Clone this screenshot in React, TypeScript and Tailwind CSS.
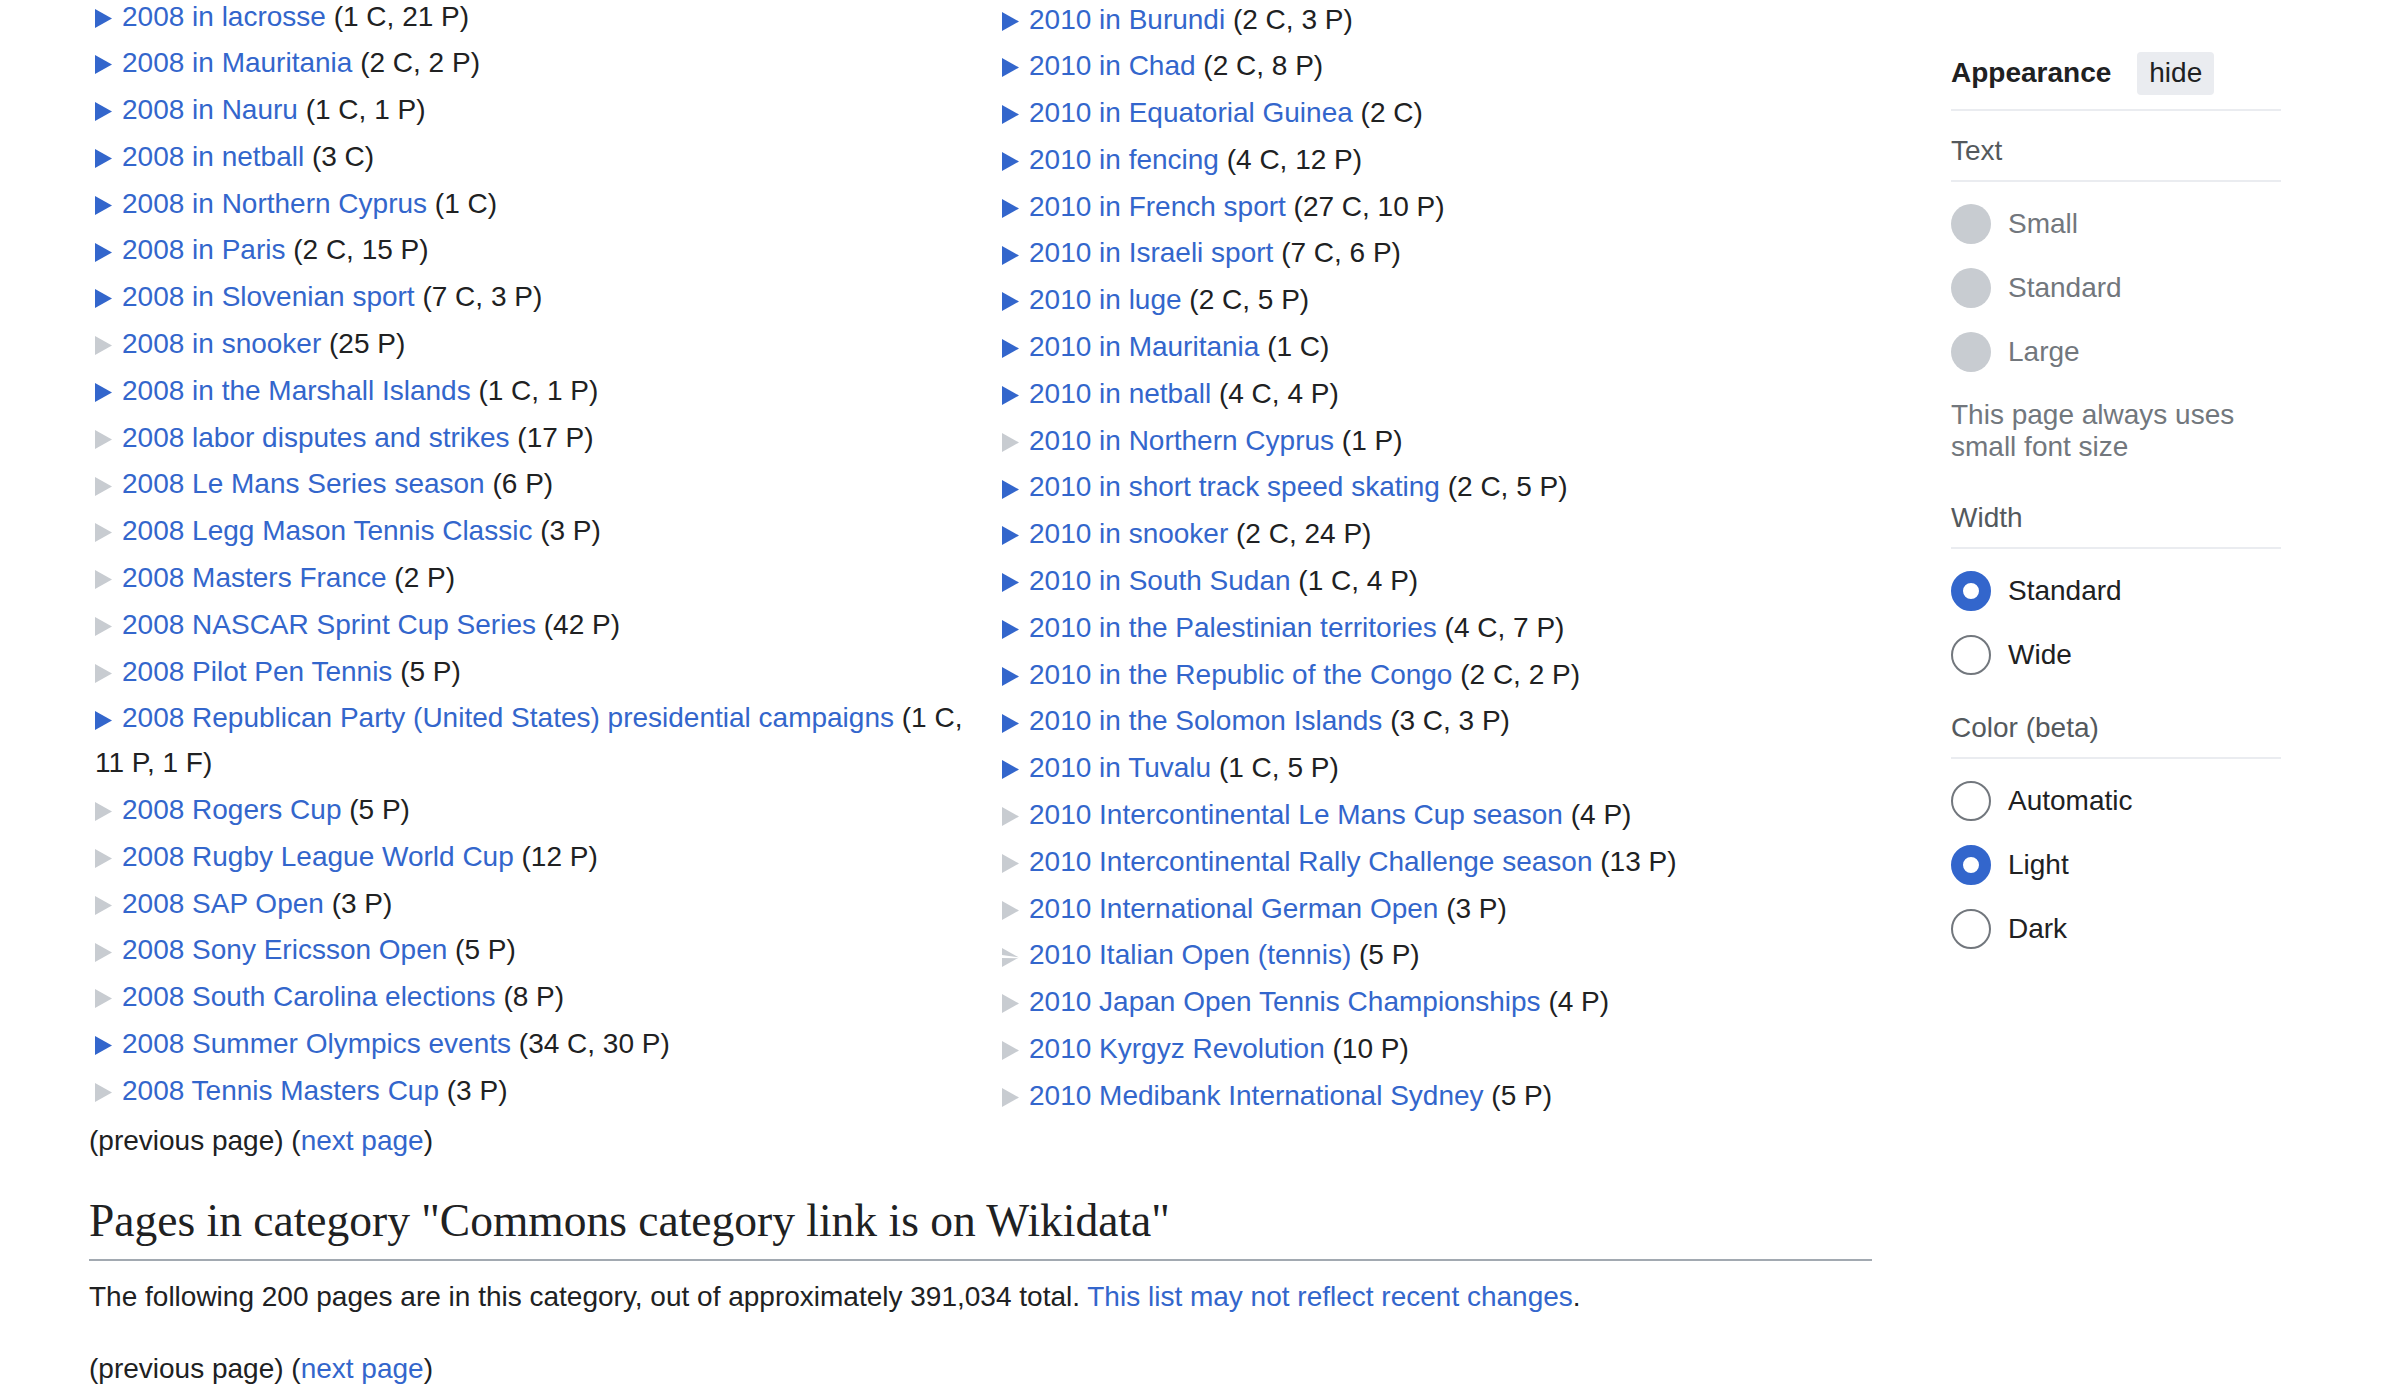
import React from "react";

type Item = { t: string; c: string; k: "b" | "g" | "x" };

const left: Item[] = [
  { t: "2008 in lacrosse", c: "(1 C, 21 P)", k: "b" },
  { t: "2008 in Mauritania", c: "(2 C, 2 P)", k: "b" },
  { t: "2008 in Nauru", c: "(1 C, 1 P)", k: "b" },
  { t: "2008 in netball", c: "(3 C)", k: "b" },
  { t: "2008 in Northern Cyprus", c: "(1 C)", k: "b" },
  { t: "2008 in Paris", c: "(2 C, 15 P)", k: "b" },
  { t: "2008 in Slovenian sport", c: "(7 C, 3 P)", k: "b" },
  { t: "2008 in snooker", c: "(25 P)", k: "g" },
  { t: "2008 in the Marshall Islands", c: "(1 C, 1 P)", k: "b" },
  { t: "2008 labor disputes and strikes", c: "(17 P)", k: "g" },
  { t: "2008 Le Mans Series season", c: "(6 P)", k: "g" },
  { t: "2008 Legg Mason Tennis Classic", c: "(3 P)", k: "g" },
  { t: "2008 Masters France", c: "(2 P)", k: "g" },
  { t: "2008 NASCAR Sprint Cup Series", c: "(42 P)", k: "g" },
  { t: "2008 Pilot Pen Tennis", c: "(5 P)", k: "g" },
  { t: "2008 Republican Party (United States) presidential campaigns", c: "(1 C, 11 P, 1 F)", k: "b" },
  { t: "2008 Rogers Cup", c: "(5 P)", k: "g" },
  { t: "2008 Rugby League World Cup", c: "(12 P)", k: "g" },
  { t: "2008 SAP Open", c: "(3 P)", k: "g" },
  { t: "2008 Sony Ericsson Open", c: "(5 P)", k: "g" },
  { t: "2008 South Carolina elections", c: "(8 P)", k: "g" },
  { t: "2008 Summer Olympics events", c: "(34 C, 30 P)", k: "b" },
  { t: "2008 Tennis Masters Cup", c: "(3 P)", k: "g" },
];

const right: Item[] = [
  { t: "2010 in Burundi", c: "(2 C, 3 P)", k: "b" },
  { t: "2010 in Chad", c: "(2 C, 8 P)", k: "b" },
  { t: "2010 in Equatorial Guinea", c: "(2 C)", k: "b" },
  { t: "2010 in fencing", c: "(4 C, 12 P)", k: "b" },
  { t: "2010 in French sport", c: "(27 C, 10 P)", k: "b" },
  { t: "2010 in Israeli sport", c: "(7 C, 6 P)", k: "b" },
  { t: "2010 in luge", c: "(2 C, 5 P)", k: "b" },
  { t: "2010 in Mauritania", c: "(1 C)", k: "b" },
  { t: "2010 in netball", c: "(4 C, 4 P)", k: "b" },
  { t: "2010 in Northern Cyprus", c: "(1 P)", k: "g" },
  { t: "2010 in short track speed skating", c: "(2 C, 5 P)", k: "b" },
  { t: "2010 in snooker", c: "(2 C, 24 P)", k: "b" },
  { t: "2010 in South Sudan", c: "(1 C, 4 P)", k: "b" },
  { t: "2010 in the Palestinian territories", c: "(4 C, 7 P)", k: "b" },
  { t: "2010 in the Republic of the Congo", c: "(2 C, 2 P)", k: "b" },
  { t: "2010 in the Solomon Islands", c: "(3 C, 3 P)", k: "b" },
  { t: "2010 in Tuvalu", c: "(1 C, 5 P)", k: "b" },
  { t: "2010 Intercontinental Le Mans Cup season", c: "(4 P)", k: "g" },
  { t: "2010 Intercontinental Rally Challenge season", c: "(13 P)", k: "g" },
  { t: "2010 International German Open", c: "(3 P)", k: "g" },
  { t: "2010 Italian Open (tennis)", c: "(5 P)", k: "x" },
  { t: "2010 Japan Open Tennis Championships", c: "(4 P)", k: "g" },
  { t: "2010 Kyrgyz Revolution", c: "(10 P)", k: "g" },
  { t: "2010 Medibank International Sydney", c: "(5 P)", k: "g" },
];

function Bullet({ k }: { k: "b" | "g" | "x" }) {
  return (
    <svg width="17" height="19" viewBox="0 0 17 19" className="inline-block mr-[10px]">
      <polygon points="0,0 17,9.5 0,19" fill={k === "b" ? "#3366cc" : "#c8ccd1"} />
      {k === "x" && <polygon points="0,7 17,9.3 17,10.3 0,10" fill="#ffffff" />}
    </svg>
  );
}

function Row({ it }: { it: Item }) {
  return (
    <div className="pl-[6px] leading-[44.8px] mb-[2px]">
      <Bullet k={it.k} />
      <a className="text-[#3366cc]">{it.t}</a> {it.c}
    </div>
  );
}

function Radio({ state, label }: { state: "dis" | "on" | "off"; label: string }) {
  const circle =
    state === "dis"
      ? "bg-[#c8ccd1]"
      : state === "on"
      ? "border-[12px] border-[#3366cc] bg-white"
      : "border-2 border-[#72777d] bg-white";
  return (
    <div className="h-[64px] flex items-center">
      <div className={`w-[40px] h-[40px] rounded-full box-border ${circle}`} />
      <span className={`ml-[17px] ${state === "dis" ? "text-[#72777d]" : "text-[#202122]"}`}>{label}</span>
    </div>
  );
}

function SectionLabel({ text, mt }: { text: string; mt: string }) {
  return (
    <div className={`${mt} leading-[40px] pb-[9px] border-b-2 border-[#eaecf0] text-[#54595d]`}>{text}</div>
  );
}

export default function App() {
  return (
    <div
      className="w-[2400px] h-[1398px] overflow-hidden bg-white text-[#202122] text-[28px]"
      style={{ fontFamily: '"Liberation Sans", Arial, sans-serif' }}
    >
      <div className="flex items-start pl-[89px]">
        <div className="w-[1783px] shrink-0">
          <div className="grid grid-cols-[907px_1fr]">
            <div className="-mt-[5.5px] pr-[20px]">
              {left.map((it, i) => (
                <Row key={i} it={it} />
              ))}
            </div>
            <div className="-mt-[2.5px]">
              {right.map((it, i) => (
                <Row key={i} it={it} />
              ))}
            </div>
          </div>
          <div className="leading-[44.8px] -mt-[2px]">
            (previous page) (<a className="text-[#3366cc]">next page</a>)
          </div>
          <h2
            className="mt-[28.5px] text-[45.5px] leading-[58px] pb-[9px] border-b-2 border-[#a2a9b1] font-normal text-[#202122]"
            style={{ fontFamily: '"Liberation Serif", "Times New Roman", serif' }}
          >
            Pages in category "Commons category link is on Wikidata"
          </h2>
          <div className="mt-[14.5px] leading-[44.8px]">
            The following 200 pages are in this category, out of approximately 391,034 total.{" "}
            <a className="text-[#3366cc]">This list may not reflect recent changes</a>.
          </div>
          <div className="mt-[27px] leading-[44.8px]">
            (previous page) (<a className="text-[#3366cc]">next page</a>)
          </div>
        </div>
        <div className="ml-[79px] w-[330px] shrink-0 pt-[51.5px]">
          <div className="flex items-center h-[43px]">
            <span className="font-bold">Appearance</span>
            <span className="ml-[26px] h-[43px] px-[12px] flex items-center bg-[#eaecf0] rounded-[4px]">hide</span>
          </div>
          <div className="mt-[14px] border-b-2 border-[#eaecf0]" />
          <SectionLabel text="Text" mt="mt-[20px]" />
          <div className="mt-[10px]">
            <Radio state="dis" label="Small" />
            <Radio state="dis" label="Standard" />
            <Radio state="dis" label="Large" />
          </div>
          <div className="mt-[15px] leading-[32px] text-[#72777d]">
            This page always uses small font size
          </div>
          <SectionLabel text="Width" mt="mt-[35px]" />
          <div className="mt-[10px]">
            <Radio state="on" label="Standard" />
            <Radio state="off" label="Wide" />
          </div>
          <SectionLabel text="Color (beta)" mt="mt-[21px]" />
          <div className="mt-[10px]">
            <Radio state="off" label="Automatic" />
            <Radio state="on" label="Light" />
            <Radio state="off" label="Dark" />
          </div>
        </div>
      </div>
    </div>
  );
}
